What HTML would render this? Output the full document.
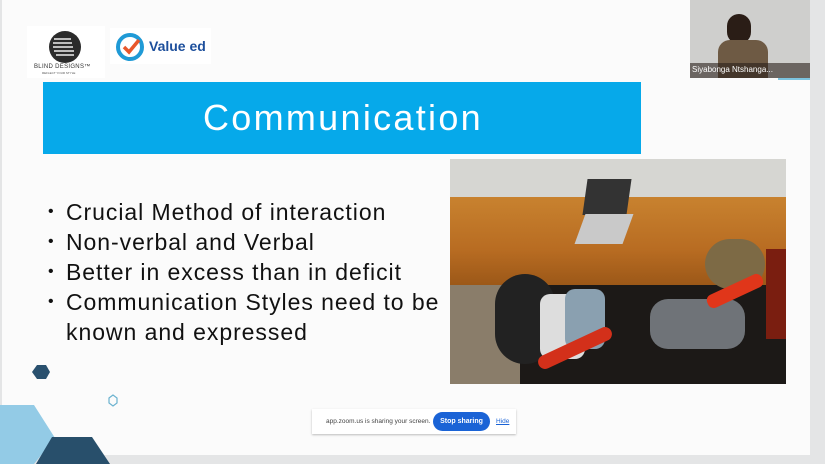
<!DOCTYPE html>
<html><head><meta charset="utf-8"><style>
*{margin:0;padding:0;box-sizing:border-box}
body{width:825px;height:464px;overflow:hidden;background:#e4e5e6;font-family:"Liberation Sans",sans-serif;position:relative}
.slide{position:absolute;left:2px;top:0;width:808px;height:455px;background:#fbfbfb}
.abs{position:absolute}
.banner{left:43px;top:82px;width:598px;height:72px;background:#06a9ea;color:#fff;font-size:36px;text-align:center;line-height:72px;letter-spacing:2.3px;padding-left:2px}
.bul{left:48px;top:197px;font-size:23px;line-height:30px;color:#111;letter-spacing:0.95px}
.bul div{position:relative;padding-left:18px}
.bul div:before{content:"•";position:absolute;left:0;font-size:16px}
</style></head><body>
<div class="slide"></div>
<div class="abs" style="left:27px;top:26px;width:78px;height:52px;background:#fff"></div>
<svg class="abs" style="left:47px;top:29px" width="36" height="36" viewBox="0 0 36 36"><circle cx="18" cy="18" r="16" fill="#2b2b2b"/><g stroke="#eee" stroke-width="1.6"><line x1="7" y1="10" x2="24" y2="10"/><line x1="6" y1="14" x2="25" y2="14"/><line x1="6" y1="18" x2="26" y2="18"/><line x1="7" y1="22" x2="27" y2="22"/><line x1="9" y1="26" x2="27" y2="26"/></g></svg>
<div class="abs" style="left:34px;top:64px;font-size:6px;color:#333;letter-spacing:.3px">BLIND DESIGNS™</div>
<div class="abs" style="left:42px;top:71px;font-size:3px;color:#555">REFLECT YOUR STYLE</div>
<div class="abs" style="left:110px;top:28px;width:101px;height:36px;background:#fff"></div>
<svg class="abs" style="left:115px;top:32px" width="30" height="30" viewBox="0 0 30 30"><circle cx="15" cy="15" r="12" fill="none" stroke="#1f9ad6" stroke-width="4"/><circle cx="15" cy="15" r="8" fill="#fff"/><path d="M9 15l5 5 10-12" fill="none" stroke="#e8572b" stroke-width="3.5"/></svg>
<div class="abs" style="left:149px;top:38px;font-size:14px;font-weight:bold;color:#1d4f9c">Value ed</div>
<div class="abs banner">Communication</div>
<div class="abs bul">
<div>Crucial Method of interaction</div>
<div>Non-verbal and Verbal</div>
<div>Better in excess than in deficit</div>
<div>Communication Styles need to be<br>known and expressed</div>
</div>
<div class="abs" style="left:450px;top:159px;width:336px;height:225px;overflow:hidden;background:#1c1917">
<div class="abs" style="left:0;top:0;width:336px;height:40px;background:#d6d6d2"></div>
<div class="abs" style="left:0;top:38px;width:336px;height:88px;background:linear-gradient(#c8822f,#b86c22 60%,#9c5818)"></div>
<div class="abs" style="left:0;top:126px;width:70px;height:99px;background:#8a7d6a"></div>
<div class="abs" style="left:135px;top:20px;width:44px;height:36px;background:#333;transform:skew(-8deg)"></div>
<div class="abs" style="left:130px;top:55px;width:48px;height:30px;background:#c9c9c9;transform:skew(-20deg)"></div>
<div class="abs" style="left:45px;top:115px;width:60px;height:90px;background:#222;border-radius:30px"></div>
<div class="abs" style="left:90px;top:135px;width:45px;height:65px;background:#ddd;border-radius:10px"></div>
<div class="abs" style="left:115px;top:130px;width:40px;height:60px;background:#8aa0b0;border-radius:10px"></div>
<div class="abs" style="left:200px;top:140px;width:95px;height:50px;background:#6f7378;border-radius:18px"></div>
<div class="abs" style="left:255px;top:80px;width:60px;height:50px;background:#7d6a45;border-radius:25px"></div>
<div class="abs" style="left:255px;top:125px;width:60px;height:14px;background:#e0361a;border-radius:6px;transform:rotate(-25deg)"></div>
<div class="abs" style="left:85px;top:182px;width:80px;height:14px;background:#d3301a;border-radius:8px;transform:rotate(-25deg)"></div>
<div class="abs" style="left:316px;top:90px;width:20px;height:90px;background:#7a1e10"></div>
</div>
<div class="abs" style="left:690px;top:0;width:120px;height:78px;background:#cfcfcd"></div>
<div class="abs" style="left:727px;top:14px;width:24px;height:30px;background:#2a1d16;border-radius:12px"></div>
<div class="abs" style="left:718px;top:40px;width:50px;height:38px;background:#6e5a44;border-radius:12px 12px 0 0"></div>
<div class="abs" style="left:690px;top:63px;width:120px;height:15px;background:rgba(40,30,25,.6)"></div>
<div class="abs" style="left:692px;top:65px;font-size:8px;color:#fff">Siyabonga Ntshanga...</div>
<div class="abs" style="left:778px;top:78px;width:32px;height:2px;background:#7cc3e0"></div>
<svg class="abs" style="left:0;top:360px" width="130" height="104" viewBox="0 0 130 104">
<polygon points="32,12 37,5 46,5 50,12 46,19 37,19" fill="#29506e"/>
<polygon points="109,38 113,35 117,38 117,43 113,46 109,43" fill="none" stroke="#6ab2cf" stroke-width="1.2"/>
<polygon points="0,45 34,45 55,78 34,104 0,104" fill="#93cbe6"/>
<polygon points="52,77 92,77 110,104 36,104" fill="#284f6b"/>
</svg>
<div class="abs" style="left:312px;top:409px;width:204px;height:25px;background:#fff;box-shadow:0 1px 2px rgba(0,0,0,.25)"></div>
<div class="abs" style="left:326px;top:418px;font-size:6.5px;color:#444">app.zoom.us is sharing your screen.</div>
<div class="abs" style="left:433px;top:412px;width:57px;height:19px;background:#1a63d6;border-radius:10px;color:#fff;font-size:7px;font-weight:bold;text-align:center;line-height:19px">Stop sharing</div>
<div class="abs" style="left:496px;top:418px;font-size:6.5px;color:#1a63d6;text-decoration:underline">Hide</div>
</body></html>
